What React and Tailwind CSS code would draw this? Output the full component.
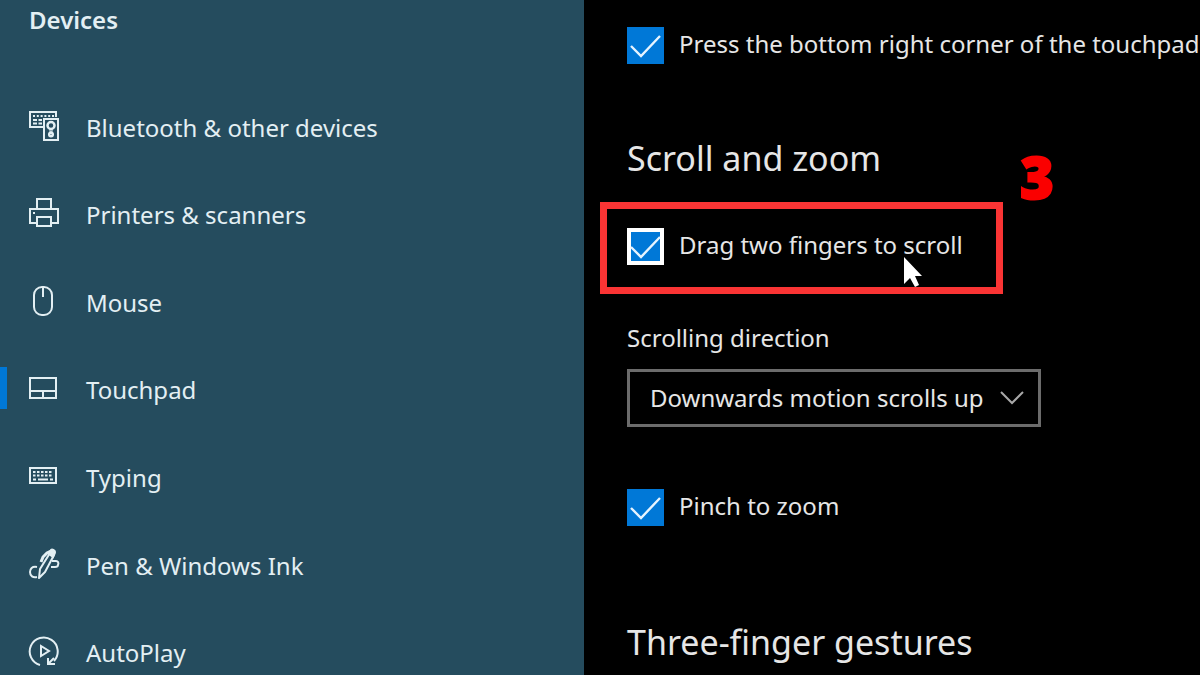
import React from "react";

function Icon({ children }) {
  return (
    <svg
      viewBox="0 0 32 32"
      className="mb-1 size-8 shrink-0"
      fill="none"
      stroke="currentColor"
      strokeWidth="2"
      aria-hidden="true"
    >
      {children}
    </svg>
  );
}

const icons = {
  bluetooth: (
    <Icon>
      <path d="M15 17H2V2h26v5" />
      <path d="M5 6h21" strokeDasharray="2 1.8" />
      <path d="M5 10h9M5 13.500h9" strokeDasharray="4 1.500" />
      <rect x="16" y="9" width="14" height="21" />
      <circle cx="23" cy="15.500" r="3.500" strokeWidth="2.500" />
      <circle cx="23" cy="24.500" r="1.800" strokeWidth="2.500" />
      <path d="M22 19h2v3h-2z" strokeWidth="1" />
    </Icon>
  ),
  printer: (
    <Icon>
      <path d="M9 12V2h14v10" />
      <path d="M9 26H2V12h28v14h-7" />
      <rect x="9" y="20" width="14" height="9" />
      <path d="M5 16h2" />
    </Icon>
  ),
  mouse: (
    <Icon>
      <rect x="6" y="2" width="18" height="28" rx="8" />
      <path d="M15 2v10" />
    </Icon>
  ),
  touchpad: (
    <Icon>
      <rect x="2" y="6" width="26" height="20" />
      <path d="M2 19h26M15 19v7" />
    </Icon>
  ),
  keyboard: (
    <Icon>
      <rect x="2" y="8" width="26" height="15" />
      <path d="M5 12h20M5 15.500h20" strokeDasharray="2.500 1.500" />
      <path d="M5 19.500h3M10 19.500h10M22 19.500h3" />
    </Icon>
  ),
  pen: (
    <Icon>
      <path d="M9 19C4 18 2 21 2 24c0 4 3 6 7 5" />
      <path d="M11 30l1-9L22 5c2-4 6-2 4 2L17 24z" strokeLinejoin="round" />
      <path d="M21 6l2-4c1-1 4 0 4 2l-2 5z" fill="currentColor" />
      <path d="M13 14l2-5 4-4 4-2" strokeWidth="3" />
      <path d="M24 13h4c2 0 3 2 2 4 0 1-1 2-3 2h-4" />
    </Icon>
  ),
  autoplay: (
    <Icon>
      <path d="M12 30A14 14 0 1 1 26 26" />
      <path d="M20 23v6h7M20 29l6-6" />
      <path d="M13 11v10l8-5z" />
    </Icon>
  ),
};

const navItems = [
  { label: "Bluetooth & other devices", icon: icons.bluetooth },
  { label: "Printers & scanners", icon: icons.printer },
  { label: "Mouse", icon: icons.mouse },
  { label: "Touchpad", icon: icons.touchpad, active: true },
  { label: "Typing", icon: icons.keyboard },
  { label: "Pen & Windows Ink", icon: icons.pen },
  { label: "AutoPlay", icon: icons.autoplay },
];

function NavItem({ label, icon, active }) {
  return (
    <li className="flex">
      <a
        href="#"
        aria-current={active ? "page" : undefined}
        className="flex flex-1 items-center whitespace-nowrap"
      >
        <span className={active ? "mb-1 h-[42px] w-[7px] bg-[#0078d7]" : "w-[7px]"} />
        <span className="flex items-center gap-[26px] pl-[21px]">
          {icon}
          {label}
        </span>
      </a>
    </li>
  );
}

function CheckRow({ id, label, focused }) {
  return (
    <div className="flex items-center gap-[15px]">
      <span className="relative size-[37px] shrink-0">
        <input
          id={id}
          type="checkbox"
          defaultChecked
          className={
            focused
              ? "peer block size-full appearance-none border-4 border-white checked:bg-[#0078d7]"
              : "peer block size-full appearance-none checked:bg-[#0078d7]"
          }
        />
        <svg
          viewBox="0 0 37 37"
          className="pointer-events-none absolute inset-0 hidden size-full peer-checked:block"
          fill="none"
          stroke="#e6f4ff"
          strokeWidth="2.400"
          aria-hidden="true"
        >
          <path d="M4 19l10 10L33 9" />
        </svg>
      </span>
      <label htmlFor={id} className="whitespace-nowrap pb-1">
        {label}
      </label>
    </div>
  );
}

export default function App() {
  return (
    <div className="grid h-screen grid-cols-[584fr_616fr] overflow-hidden bg-black font-['Noto_Sans','Open_Sans',sans-serif] text-[24px] leading-8 text-[#e6e6e6]">
      <aside className="overflow-hidden bg-[#254c5e] text-[#e3eff3]">
        <h1 className="pl-[29px] pt-1 font-semibold">Devices</h1>
        <nav aria-label="Devices" className="pt-12">
          <ul className="grid min-h-[613px] auto-rows-fr">
            {navItems.map((item) => (
              <NavItem key={item.label} {...item} />
            ))}
          </ul>
        </nav>
      </aside>

      <main className="overflow-hidden pl-[43px] pt-[27px]">
        <CheckRow id="corner" label="Press the bottom right corner of the touchpad" />

        <section className="pt-[70px]">
          <h2 className="text-[34px] leading-[48px]">Scroll and zoom</h2>
          <div className="relative -ml-[27px] mt-5 w-[403px] border-[7px] border-[#fa3434] px-5 pb-[22px] pt-[19px]">
            <CheckRow id="drag" label="Drag two fingers to scroll" focused />
            <svg
              viewBox="0 0 20 32"
              className="pointer-events-none absolute left-[296px] top-[48px] h-8 w-5"
              fill="#fff"
              aria-hidden="true"
            >
              <path d="M1 0v27l6-6 5 9 4-2-4-9h7z" />
            </svg>
            <span className="absolute -top-[62px] left-[413px] font-['Open_Sans',sans-serif] text-[58px] font-extrabold leading-[60px] text-[#fa0000] [-webkit-text-stroke:2px_#fa0000]">
              3
            </span>
          </div>

          <div className="pt-7">
            <label htmlFor="direction" className="block">
              Scrolling direction
            </label>
            <div className="relative mt-[15px] w-[414px]">
              <select
                id="direction"
                className="block h-[58px] w-full appearance-none border-[3px] border-[#6c6c6c] bg-black pl-5"
              >
                <option>Downwards motion scrolls up</option>
                <option>Downwards motion scrolls down</option>
              </select>
              <svg
                viewBox="0 0 24 14"
                className="pointer-events-none absolute right-[17px] top-[22px] h-[14px] w-6"
                fill="none"
                stroke="#a8a8a8"
                strokeWidth="2"
                aria-hidden="true"
              >
                <path d="M1 1l11 11L23 1" />
              </svg>
            </div>
          </div>

          <div className="pt-[62px]">
            <CheckRow id="pinch" label="Pinch to zoom" />
          </div>
        </section>

        <section className="pt-[92px]">
          <h2 className="text-[34px] leading-[48px]">Three-finger gestures</h2>
        </section>
      </main>
    </div>
  );
}
